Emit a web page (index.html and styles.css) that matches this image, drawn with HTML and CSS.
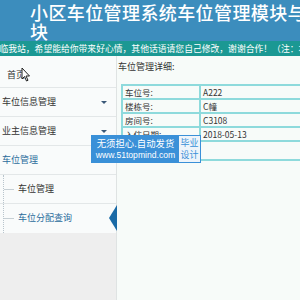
FILE: index.html
```html
<!DOCTYPE html>
<html lang="zh-CN">

<head>
  <meta charset="UTF-8" />
  <title>小区车位管理系统</title>
  <link rel="stylesheet" href="styles.css">
</head>

<body>
  <div id="top">
    <h1>小区车位管理系统车位管理模块与块</h1>
  </div>
  <div id="notice">欢迎光临我站，希望能给你带来好心情，其他话语请您自己修改，谢谢合作！（注：本系统仅供学习参考）</div>

  <div id="main">
    <div id="sidebar">
      <ul class="menu">
        <li class="home">首页
          <svg class="cursor" width="10" height="15" viewBox="0 0 10 15">
            <path d="M1 1 L1 12 L3.5 9.5 L5.5 14 L7 13.3 L5 9 L8.5 9 Z" fill="#fff" stroke="#222" stroke-width="1" stroke-linejoin="round" />
          </svg>
        </li>
        <li>车位信息管理 <span class="caret"></span></li>
        <li>业主信息管理 <span class="caret"></span></li>
        <li class="open">车位管理</li>
        <li class="sub">车位管理</li>
        <li class="sub active">车位分配查询 <span class="pointer"></span></li>
      </ul>
    </div>

    <div id="content">
      <p class="title">车位管理详细:</p>
      <table class="detail">
        <tr><td class="label">车位号:</td><td>A222</td></tr>
        <tr><td class="label">楼栋号:</td><td>C幢</td></tr>
        <tr><td class="label">房间号:</td><td>C3108</td></tr>
        <tr><td class="label">入住日期:</td><td>2018-05-13</td></tr>
        <tr class="last"><td colspan="2"></td></tr>
      </table>
    </div>
  </div>

  <div id="badge">
    <div class="badge-left">
      <span class="slogan">无须担心.自动发货</span>
      <span class="site">www.51topmind.com</span>
    </div>
    <div class="badge-right">毕业<br>设计</div>
  </div>
</body>

</html>
```

FILE: styles.css
```css
html,
body {
  margin: 0;
  padding: 0;
  overflow: hidden;
  height: 300px;
}

body {
  font-family: "Liberation Sans", "Noto Sans CJK SC", sans-serif;
  background-color: #f7fbf9;
  color: #333;
  position: relative;
}

#top {
  height: 41px;
  background-color: #3c8dbd;
  overflow: hidden;
}

#top h1 {
  width: 282px;
  margin: 0;
  padding: 3px 0 0 30px;
  font-family: "Noto Sans CJK SC", sans-serif;
  font-size: 18px;
  line-height: 19px;
  font-weight: 500;
  letter-spacing: 0.4px;
  color: #fff;
}

#notice {
  height: 15px;
  line-height: 15px;
  background-color: #1b9893;
  color: #fff;
  font-family: "Noto Sans CJK SC", sans-serif;
  font-size: 8.8px;
  white-space: nowrap;
  overflow: hidden;
  text-indent: -27px;
}

#main {
  display: flex;
  height: 244px;
}

#sidebar {
  width: 116px;
  flex-shrink: 0;
  background-color: #eeeeee;
  border-right: 1px solid #dfe3e3;
}

.menu {
  list-style: none;
  margin: 0;
  padding: 0;
  background-color: #f9fbfb;
  font-family: "Noto Sans CJK SC", sans-serif;
  font-size: 9px;
}

.menu li {
  position: relative;
  height: 28px;
  line-height: 28px;
  padding-left: 2px;
  border-bottom: 1px solid #e3e7e8;
}

.menu li.home {
  height: 25px;
  line-height: 25px;
  padding-top: 6px;
  padding-left: 7px;
}

.menu li.open {
  color: #2a6c9c;
}

.menu li.sub {
  padding-left: 18px;
}

.menu li.sub::before {
  content: "";
  position: absolute;
  left: 3px;
  top: 0;
  bottom: 0;
  border-left: 1px dotted #b8c4cc;
}

.menu li.sub::after {
  content: "";
  position: absolute;
  left: 4px;
  top: 14px;
  width: 10px;
  border-top: 1px solid #c6cfd4;
}

.menu li.active {
  color: #2a6c9c;
  height: 29px;
  border-bottom: none;
}

.caret {
  position: absolute;
  right: 9px;
  top: 13px;
  border-left: 3px solid transparent;
  border-right: 3px solid transparent;
  border-top: 3px solid #3a5878;
}

.pointer {
  position: absolute;
  right: -1px;
  top: 1px;
  border-top: 13px solid transparent;
  border-bottom: 13px solid transparent;
  border-right: 8px solid #1a6aa6;
}

.cursor {
  position: absolute;
  left: 21px;
  top: 11px;
}

#content {
  flex: 1;
  overflow: hidden;
}

.title {
  margin: 0;
  padding: 5px 0 0 1px;
  height: 17px;
  line-height: 12px;
  font-family: "Noto Sans CJK SC", sans-serif;
  font-size: 9px;
}

.detail {
  margin: 6px 0 0 4px;
  width: 420px;
  border-collapse: collapse;
  border: 2px solid #8edadc;
  font-family: "Noto Sans CJK SC", sans-serif;
  font-size: 8.5px;
}

.detail td {
  height: 12px;
  line-height: 12px;
  padding: 0 2px;
  border: 2px solid #8edadc;
}

.detail td.label {
  width: 72px;
}

.detail tr.last td {
  height: 17px;
}

#badge {
  position: absolute;
  left: 91px;
  top: 135px;
  display: flex;
  height: 26px;
  border: 1px solid #3a90d8;
  font-family: "Noto Sans CJK SC", sans-serif;
}

.badge-left {
  width: 87px;
  background-color: #3a90d8;
  color: #fff;
  display: flex;
  flex-direction: column;
  align-items: center;
  padding-top: 1px;
}

.slogan {
  font-size: 9.4px;
  line-height: 12px;
}

.site {
  font-family: "Liberation Sans", sans-serif;
  font-size: 8.6px;
  line-height: 12px;
}

.badge-right {
  width: 21px;
  background-color: #eef4fa;
  color: #3a90d8;
  font-size: 9px;
  line-height: 12px;
  text-align: center;
  padding-top: 1px;
}
```
